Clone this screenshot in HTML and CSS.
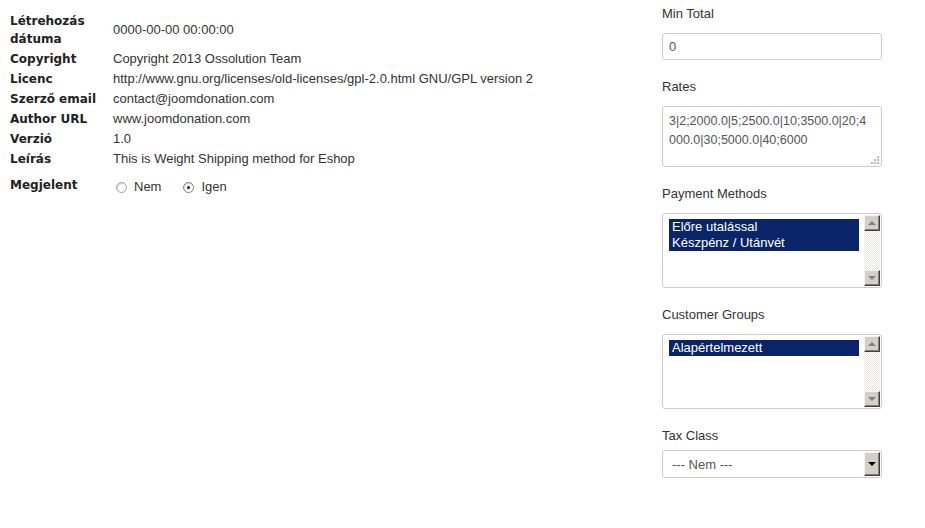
FILE: index.html
```html
<!DOCTYPE html>
<html>
<head>
    <meta charset="UTF-8">
    <title>Weight Shipping</title>
    <link rel="stylesheet" href="styles.css">
</head>
<body>

    <div class="page">
        <table class="details">
            <tr>
                <td class="key">Létrehozás dátuma</td>
                <td>0000-00-00 00:00:00</td>
            </tr>
            <tr>
                <td class="key">Copyright</td>
                <td>Copyright 2013 Ossolution Team</td>
            </tr>
            <tr>
                <td class="key">Licenc</td>
                <td>http://www.gnu.org/licenses/old-licenses/gpl-2.0.html GNU/GPL version 2</td>
            </tr>
            <tr>
                <td class="key">Szerző email</td>
                <td>contact@joomdonation.com</td>
            </tr>
            <tr>
                <td class="key">Author URL</td>
                <td>www.joomdonation.com</td>
            </tr>
            <tr>
                <td class="key">Verzió</td>
                <td>1.0</td>
            </tr>
            <tr>
                <td class="key">Leírás</td>
                <td>This is Weight Shipping method for Eshop</td>
            </tr>
            <tr class="publish">
                <td class="key">Megjelent</td>
                <td>
                    <div class="radios">
                        <span class="radio"></span><span class="radio-text">Nem</span>
                        <span class="radio checked"></span><span class="radio-text">Igen</span>
                    </div>
                </td>
            </tr>
        </table>

        <div class="params">
            <div class="field">
                <div class="label">Min Total</div>
                <div class="input">0</div>
            </div>

            <div class="field">
                <div class="label">Rates</div>
                <div class="textarea">
                    3|2;2000.0|5;2500.0|10;3500.0|20;4<br>000.0|30;5000.0|40;6000
                    <svg class="grip" width="9" height="9" viewBox="0 0 9 9">
                        <rect x="7" y="1" width="2" height="2" fill="#bbb"/>
                        <rect x="4" y="4" width="2" height="2" fill="#bbb"/>
                        <rect x="7" y="4" width="2" height="2" fill="#bbb"/>
                        <rect x="1" y="7" width="2" height="2" fill="#bbb"/>
                        <rect x="4" y="7" width="2" height="2" fill="#bbb"/>
                        <rect x="7" y="7" width="2" height="2" fill="#bbb"/>
                    </svg>
                </div>
            </div>

            <div class="field">
                <div class="label">Payment Methods</div>
                <div class="listbox">
                    <div class="options">
                        <div class="option selected">Előre utalással</div>
                        <div class="option selected">Készpénz / Utánvét</div>
                    </div>
                    <div class="scrollbar">
                        <div class="sb-btn"><span class="arrow up"></span></div>
                        <div class="sb-track"></div>
                        <div class="sb-btn"><span class="arrow down"></span></div>
                    </div>
                </div>
            </div>

            <div class="field">
                <div class="label">Customer Groups</div>
                <div class="listbox">
                    <div class="options">
                        <div class="option selected">Alapértelmezett</div>
                    </div>
                    <div class="scrollbar">
                        <div class="sb-btn"><span class="arrow up"></span></div>
                        <div class="sb-track"></div>
                        <div class="sb-btn"><span class="arrow down"></span></div>
                    </div>
                </div>
            </div>

            <div class="field last">
                <div class="label">Tax Class</div>
                <div class="select">
                    <span class="select-text">--- Nem ---</span>
                    <div class="sb-btn drop"><span class="arrow down dark"></span></div>
                </div>
            </div>
        </div>
    </div>

</body>
</html>
```

FILE: styles.css
```css
body {
    margin: 0;
    font-family: "Liberation Sans", Arial, sans-serif;
    font-size: 13px;
    color: #333;
    background: #fff;
}

.page {
    display: flex;
    align-items: flex-start;
    padding: 6px 0 0 10px;
}

.details {
    width: 652px;
    margin-top: 5px;
    border-collapse: collapse;
}

.details td {
    padding: 1px 0;
    line-height: 18px;
    vertical-align: middle;
}

.details td.key {
    width: 103px;
    font-family: "DejaVu Sans", Verdana, sans-serif;
    font-size: 12px;
    font-weight: bold;
    color: #222;
}

.details tr.publish td {
    padding-top: 7px;
    vertical-align: top;
}

.radios {
    display: flex;
    align-items: center;
    padding-top: 2px;
    padding-left: 3px;
}

.radio {
    width: 11px;
    height: 11px;
    border: 1px solid #a0a0a0;
    border-radius: 50%;
    box-sizing: border-box;
    position: relative;
    margin-right: 7px;
    background: #fff;
    box-shadow: inset 1px 1px 0 #d8d8d8;
}

.radio-text {
    margin-right: 22px;
}

.radio.checked {
    border-color: #808080;
}

.radio.checked::after {
    content: "";
    position: absolute;
    left: 3px;
    top: 3px;
    width: 3px;
    height: 3px;
    background: #111;
    border-radius: 50%;
}

.params {
    width: 220px;
    margin-top: -1px;
}

.field {
    margin-bottom: 18px;
}

.label {
    line-height: 18px;
    margin-bottom: 10px;
    color: #333;
}

.field.last .label {
    margin-bottom: 5px;
}

.input {
    height: 27px;
    border: 1px solid #ccc;
    border-radius: 3px;
    box-sizing: border-box;
    padding: 0 6px;
    line-height: 25px;
    color: #555;
}

.textarea {
    position: relative;
    height: 61px;
    border: 1px solid #ccc;
    border-radius: 3px;
    box-sizing: border-box;
    padding: 5px 6px 3px;
    font-size: 12.5px;
    line-height: 19px;
    color: #555;
}

.grip {
    position: absolute;
    right: 2px;
    bottom: 2px;
}

.listbox {
    display: flex;
    height: 75px;
    border: 1px solid #ccc;
    border-radius: 3px;
    box-sizing: border-box;
}

.options {
    flex: 1;
    padding: 5px 5px 0 6px;
}

.option {
    height: 16px;
    line-height: 16px;
    padding-left: 3px;
    color: #333;
}

.option.selected {
    background: #0a246a;
    color: #fff;
}

.scrollbar {
    display: flex;
    flex-direction: column;
    width: 16px;
    margin: 1px 1px 1px 0;
}

.sb-track {
    flex: 1;
    background-color: #eae8e3;
    background-image:
        linear-gradient(45deg, #fff 25%, transparent 25%, transparent 75%, #fff 75%),
        linear-gradient(45deg, #fff 25%, transparent 25%, transparent 75%, #fff 75%);
    background-size: 2px 2px;
    background-position: 0 0, 1px 1px;
}

.sb-btn {
    width: 16px;
    height: 16px;
    box-sizing: border-box;
    background: #d4d0c8;
    border-top: 1px solid #f4f2ee;
    border-left: 1px solid #f4f2ee;
    border-right: 1px solid #404040;
    border-bottom: 1px solid #404040;
    box-shadow: inset -1px -1px 0 #808080;
    display: flex;
    align-items: center;
    justify-content: center;
}

.arrow {
    width: 0;
    height: 0;
    border-left: 4px solid transparent;
    border-right: 4px solid transparent;
}

.arrow.up {
    border-bottom: 4px solid #808080;
}

.arrow.down {
    border-top: 4px solid #808080;
}

.arrow.dark {
    border-top-color: #000;
}

.select {
    display: flex;
    align-items: center;
    height: 28px;
    border: 1px solid #ccc;
    border-radius: 3px;
    box-sizing: border-box;
    padding: 1px 1px 1px 9px;
}

.select-text {
    flex: 1;
    color: #555;
}

.sb-btn.drop {
    height: 24px;
}
```
